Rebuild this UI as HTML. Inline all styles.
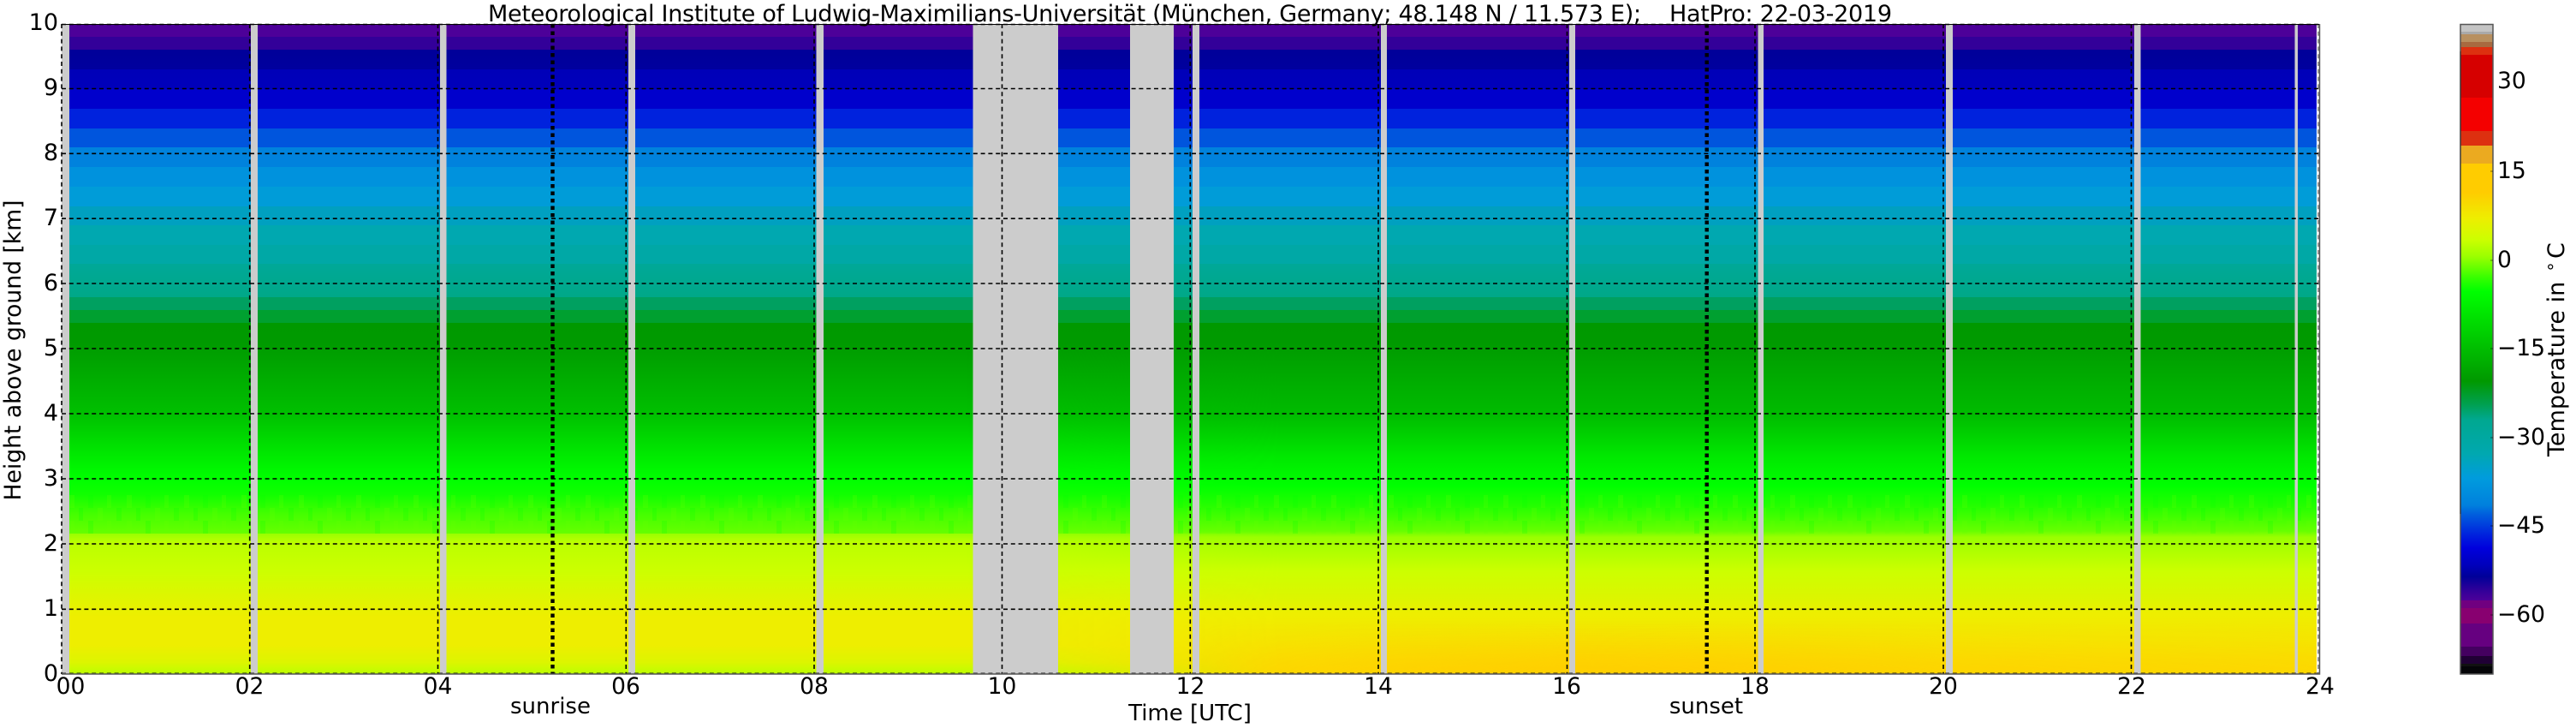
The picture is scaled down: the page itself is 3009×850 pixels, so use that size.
<!DOCTYPE html>
<html lang="en"><head><meta charset="utf-8"><title>HatPro 22-03-2019</title>
<style>html,body{margin:0;padding:0;background:#fff}svg{display:block}text{font-family:"DejaVu Sans","Liberation Sans",sans-serif;fill:#000;white-space:pre}</style></head>
<body>
<svg xmlns="http://www.w3.org/2000/svg" width="3009" height="850" viewBox="0 0 3009 850">
<defs>
<linearGradient id="gL" gradientUnits="userSpaceOnUse" x1="0" y1="0" x2="0" y2="1000">
<stop offset="2.8%" stop-color="#4d0099"/><stop offset="4.3%" stop-color="#4d0099"/><stop offset="4.3%" stop-color="#330099"/><stop offset="5.8%" stop-color="#330099"/><stop offset="5.8%" stop-color="#000099"/><stop offset="8.1%" stop-color="#00009e"/><stop offset="8.1%" stop-color="#0000b8"/><stop offset="10.4%" stop-color="#0000bb"/><stop offset="10.4%" stop-color="#0000cc"/><stop offset="12.7%" stop-color="#0000cc"/><stop offset="12.7%" stop-color="#0022dd"/><stop offset="15%" stop-color="#0022dd"/><stop offset="15%" stop-color="#0055dd"/><stop offset="17.2%" stop-color="#0055dd"/><stop offset="17.2%" stop-color="#0082dd"/><stop offset="19.5%" stop-color="#0082dd"/><stop offset="19.5%" stop-color="#0092dd"/><stop offset="21.8%" stop-color="#0092dd"/><stop offset="21.8%" stop-color="#009cd8"/><stop offset="24.1%" stop-color="#009cd8"/><stop offset="24.1%" stop-color="#00a0c0"/><stop offset="26.3%" stop-color="#00a0c0"/><stop offset="26.3%" stop-color="#00a8b0"/><stop offset="28.6%" stop-color="#00a8b0"/><stop offset="28.6%" stop-color="#00a8a6"/><stop offset="30.8%" stop-color="#00a8a6"/><stop offset="30.8%" stop-color="#00a898"/><stop offset="34.7%" stop-color="#00a888"/><stop offset="34.7%" stop-color="#00a060"/><stop offset="36.2%" stop-color="#00a060"/><stop offset="36.2%" stop-color="#00a030"/><stop offset="37.7%" stop-color="#00a030"/><stop offset="37.7%" stop-color="#009900"/><stop offset="40%" stop-color="#009a00"/><stop offset="42.5%" stop-color="#00a500"/><stop offset="48.3%" stop-color="#00c000"/><stop offset="52%" stop-color="#00e000"/><stop offset="55.9%" stop-color="#00ff00"/><stop offset="57.7%" stop-color="#10ff00"/><stop offset="60%" stop-color="#44ff00"/><stop offset="62.3%" stop-color="#66ff00"/><stop offset="62.3%" stop-color="#99ff00"/><stop offset="63.3%" stop-color="#bbff00"/><stop offset="66.7%" stop-color="#ccff00"/><stop offset="70%" stop-color="#e0f500"/><stop offset="72%" stop-color="#eeee00"/><stop offset="75.3%" stop-color="#eeee00"/><stop offset="77.3%" stop-color="#ddf500"/><stop offset="78.7%" stop-color="#bbff00"/>
</linearGradient>
<linearGradient id="gR" gradientUnits="userSpaceOnUse" x1="0" y1="0" x2="0" y2="1000">
<stop offset="40%" stop-color="#009a00"/><stop offset="45.3%" stop-color="#00b000"/><stop offset="48.3%" stop-color="#00bb00"/><stop offset="53.3%" stop-color="#00e800"/><stop offset="56.7%" stop-color="#00ff00"/><stop offset="59%" stop-color="#22ff00"/><stop offset="62%" stop-color="#66ff00"/><stop offset="62.7%" stop-color="#99ff00"/><stop offset="64%" stop-color="#aaff00"/><stop offset="66.7%" stop-color="#ccff00"/><stop offset="70%" stop-color="#ddf500"/><stop offset="71.7%" stop-color="#eeee00"/><stop offset="74.7%" stop-color="#f5e600"/><stop offset="77.3%" stop-color="#fbdc00"/><stop offset="78.7%" stop-color="#fdd900"/>
</linearGradient>
<linearGradient id="gO" gradientUnits="userSpaceOnUse" x1="0" y1="725" x2="0" y2="787">
<stop offset="0" stop-color="#ffcc00" stop-opacity="0"/><stop offset="1" stop-color="#ffcc00" stop-opacity=".85"/>
</linearGradient>
<linearGradient id="hR" gradientUnits="userSpaceOnUse" x1="72" y1="0" x2="2709" y2="0">
<stop offset=".40" stop-color="#000"/><stop offset=".44" stop-color="#333"/><stop offset=".50" stop-color="#aaa"/><stop offset=".54" stop-color="#fff"/><stop offset="1" stop-color="#fff"/>
</linearGradient>
<linearGradient id="hO" gradientUnits="userSpaceOnUse" x1="72" y1="0" x2="2709" y2="0">
<stop offset=".50" stop-color="#000"/><stop offset=".60" stop-color="#aaa"/><stop offset=".67" stop-color="#fff"/><stop offset=".74" stop-color="#ddd"/><stop offset=".84" stop-color="#666"/><stop offset="1" stop-color="#222"/>
</linearGradient>
<mask id="mR" maskUnits="userSpaceOnUse" x="72" y="0" width="2640" height="850"><rect x="72" y="0" width="2640" height="850" fill="url(#hR)"/></mask>
<mask id="mO" maskUnits="userSpaceOnUse" x="72" y="0" width="2640" height="850"><rect x="72" y="0" width="2640" height="850" fill="url(#hO)"/></mask>
<pattern id="st" patternUnits="userSpaceOnUse" x="81" y="578" width="67" height="30">
<rect x="0" width="6" height="15" fill="#66ff00" opacity=".22"/><rect x="11" y="15" width="5" height="15" fill="#00ff00" opacity=".22"/><rect x="22" width="6" height="15" fill="#00ff00" opacity=".2"/><rect x="33" y="15" width="6" height="15" fill="#66ff00" opacity=".22"/><rect x="44" width="5" height="15" fill="#66ff00" opacity=".2"/><rect x="55" y="15" width="6" height="15" fill="#00ff00" opacity=".2"/>
</pattern>
<linearGradient id="gC" gradientUnits="userSpaceOnUse" x1="0" y1="0" x2="0" y2="1000">
<stop offset="2.8%" stop-color="#c4c4c4"/><stop offset="3.7%" stop-color="#c4c4c4"/><stop offset="3.7%" stop-color="#aaaaaa"/><stop offset="4%" stop-color="#aaaaaa"/><stop offset="4%" stop-color="#b89060"/><stop offset="4.9%" stop-color="#b89060"/><stop offset="4.9%" stop-color="#a86a40"/><stop offset="5.5%" stop-color="#a86a40"/><stop offset="5.5%" stop-color="#dd3010"/><stop offset="6.4%" stop-color="#dd3010"/><stop offset="6.4%" stop-color="#d60000"/><stop offset="11.4%" stop-color="#d60000"/><stop offset="11.4%" stop-color="#f40000"/><stop offset="15.3%" stop-color="#f40000"/><stop offset="15.3%" stop-color="#dd3010"/><stop offset="17%" stop-color="#dd3010"/><stop offset="17%" stop-color="#ebaa20"/><stop offset="19.1%" stop-color="#ebaa20"/><stop offset="19.1%" stop-color="#ffcc00"/><stop offset="22.5%" stop-color="#ffcc00"/><stop offset="25.5%" stop-color="#eeee00"/><stop offset="28%" stop-color="#ccff00"/><stop offset="30%" stop-color="#99ff00"/><stop offset="32.5%" stop-color="#33ff00"/><stop offset="34%" stop-color="#00ff00"/><stop offset="44.5%" stop-color="#009900"/><stop offset="47.2%" stop-color="#00a050"/><stop offset="49%" stop-color="#00a890"/><stop offset="53%" stop-color="#00a8b0"/><stop offset="55.8%" stop-color="#009cdd"/><stop offset="59%" stop-color="#0080dd"/><stop offset="60%" stop-color="#0060dd"/><stop offset="62.5%" stop-color="#0020dd"/><stop offset="64%" stop-color="#0000dd"/><stop offset="66%" stop-color="#0000bb"/><stop offset="67.3%" stop-color="#000099"/><stop offset="69%" stop-color="#330099"/><stop offset="70.1%" stop-color="#4d0099"/><stop offset="70.1%" stop-color="#700080"/><stop offset="71%" stop-color="#700080"/><stop offset="71%" stop-color="#880070"/><stop offset="72.8%" stop-color="#880070"/><stop offset="72.8%" stop-color="#660080"/><stop offset="75.5%" stop-color="#660080"/><stop offset="75.5%" stop-color="#440060"/><stop offset="76.6%" stop-color="#440060"/><stop offset="76.6%" stop-color="#200035"/><stop offset="77.5%" stop-color="#200035"/><stop offset="77.5%" stop-color="#111111"/><stop offset="77.8%" stop-color="#111111"/><stop offset="77.8%" stop-color="#050508"/><stop offset="78.7%" stop-color="#050508"/>
</linearGradient>
</defs>

<!-- heatmap -->
<rect x="72" y="28" width="2634" height="759" fill="url(#gL)"/>
<rect x="72" y="400" width="2634" height="387" fill="url(#gR)" mask="url(#mR)"/>
<rect x="72" y="725" width="2634" height="62" fill="url(#gO)" mask="url(#mO)"/>
<rect x="81" y="578" width="2625" height="45" fill="url(#st)"/>

<!-- missing data -->
<g fill="#cccccc">
<rect x="72" y="28" width="9" height="759"/>
<rect x="293" y="28" width="8" height="759"/>
<rect x="514" y="28" width="7.5" height="759"/>
<rect x="734" y="28" width="8" height="759"/>
<rect x="953.5" y="28" width="8.5" height="759"/>
<rect x="1136.5" y="28" width="99.5" height="759"/>
<rect x="1320" y="28" width="51" height="759"/>
<rect x="1393" y="28" width="8" height="759"/>
<rect x="1613" y="28" width="7" height="759"/>
<rect x="1833" y="28" width="7" height="759"/>
<rect x="2053.5" y="28" width="6.5" height="759"/>
<rect x="2273" y="28" width="8" height="759"/>
<rect x="2493" y="28" width="7.5" height="759"/>
<rect x="2680.5" y="28" width="3.5" height="759"/>
</g>

<!-- grid -->
<g stroke="#000" stroke-width="1.6" stroke-dasharray="5 3.8" fill="none">
<path d="M72 28.5H2709M72 103.5H2709M72 179.3H2709M72 255.2H2709M72 331H2709M72 407H2709M72 483H2709M72 559H2709M72 635H2709M72 711.3H2709"/>
<path stroke-opacity=".55" d="M72 786H2709"/>
<path d="M72 28V787M291.7 28V787M511.5 28V787M731.3 28V787M951 28V787M1170.5 28V787M1390.3 28V787M1610 28V787M1830.5 28V787M2050 28V787M2270 28V787M2489.5 28V787"/>
<path stroke-opacity=".5" d="M2708 28V787"/>
</g>
<!-- sunrise / sunset -->
<path d="M645.5 28V787M1993.7 28V787" stroke="#000" stroke-width="4.4" stroke-dasharray="4.5 4" fill="none"/>

<!-- frame -->
<path d="M72 787H2709.5V28" fill="none" stroke="#555" stroke-width="1.5"/>
<path d="M71.5 28.5H2709" fill="none" stroke="#000" stroke-width="1"/>

<!-- title -->
<text x="570" y="25" font-size="27" textLength="1640" lengthAdjust="spacing">Meteorological Institute of Ludwig-Maximilians-Universität (München, Germany; 48.148 N / 11.573 E);    HatPro: 22-03-2019</text>

<!-- y ticks -->
<g font-size="27" text-anchor="end">
<text x="68" y="35">10</text><text x="68" y="111">9</text><text x="68" y="187">8</text><text x="68" y="263">7</text><text x="68" y="339">6</text><text x="68" y="415">5</text><text x="68" y="491">4</text><text x="68" y="567">3</text><text x="68" y="643">2</text><text x="68" y="719">1</text><text x="68" y="795">0</text>
</g>
<!-- x ticks -->
<g font-size="26.5" text-anchor="middle">
<text x="82.5" y="810">00</text><text x="291.5" y="810">02</text><text x="511.5" y="810">04</text><text x="731" y="810">06</text><text x="951" y="810">08</text><text x="1170.5" y="810">10</text><text x="1390.5" y="810">12</text><text x="1610" y="810">14</text><text x="1830" y="810">16</text><text x="2050" y="810">18</text><text x="2270" y="810">20</text><text x="2490" y="810">22</text><text x="2710" y="810">24</text>
</g>
<g font-size="26" text-anchor="middle">
<text x="643" y="833">sunrise</text>
<text x="1993" y="833">sunset</text>
<text x="1390" y="841">Time [UTC]</text>
<text transform="translate(24 409) rotate(-90)" font-size="26.6">Height above ground [km]</text>
</g>

<!-- colorbar -->
<rect x="2874" y="28" width="38" height="759" fill="url(#gC)"/>
<rect x="2874" y="28.5" width="38" height="758.5" fill="none" stroke="#555" stroke-width="1.5"/>
<path d="M2874 60V600" stroke="#000" stroke-opacity=".5" stroke-width="1" fill="none"/>
<path d="M2909 200h3M2909 304h3M2909 407h3M2909 511h3M2909 614h3M2909 718h3" stroke="#000" stroke-opacity=".35" stroke-width="1.5" fill="none"/>
<g font-size="26.5">
<text x="2917" y="103">30</text><text x="2917" y="208">15</text><text x="2917" y="312">0</text><text x="2917" y="415">−15</text><text x="2917" y="519">−30</text><text x="2917" y="622">−45</text><text x="2917" y="726">−60</text>
</g>
<text transform="translate(2995 533) rotate(-90)" font-size="27">Temperature in</text>
<text transform="translate(2985.4 311.5) rotate(-90)" font-size="20" text-anchor="middle">∘</text>
<text transform="translate(2995 302) rotate(-90)" font-size="27">C</text>
</svg>
</body></html>
